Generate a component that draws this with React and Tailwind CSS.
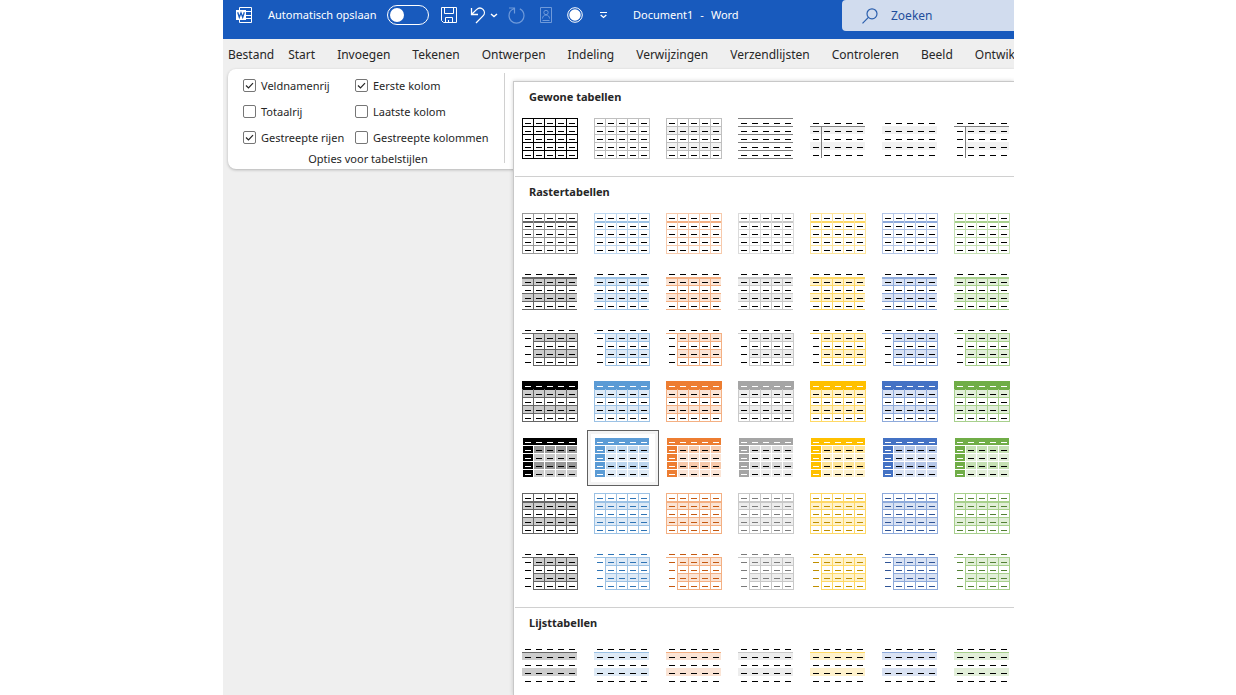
import { useState } from "react";

const PALETTES = [
  { name: "Zwart", strong: "#000000", line: "#666666", soft: "#999999", mid: "#999999", tint: "#cccccc", ink: "#000000" },
  { name: "Blauw", strong: "#5b9bd5", line: "#9cc2e5", soft: "#bdd6ee", mid: "#bdd6ee", tint: "#deeaf6", ink: "#2e74b5" },
  { name: "Oranje", strong: "#ed7d31", line: "#f4b083", soft: "#f7caac", mid: "#f7caac", tint: "#fbe4d5", ink: "#c45911" },
  { name: "Grijs", strong: "#a5a5a5", line: "#c9c9c9", soft: "#dbdbdb", mid: "#dbdbdb", tint: "#ededed", ink: "#7b7b7b" },
  { name: "Goud", strong: "#ffc000", line: "#ffd966", soft: "#ffe599", mid: "#ffe599", tint: "#fff2cc", ink: "#bf8f00" },
  { name: "Donkerblauw", strong: "#4472c4", line: "#8eaadb", soft: "#b4c6e7", mid: "#b4c6e7", tint: "#d9e2f3", ink: "#2f5496" },
  { name: "Groen", strong: "#70ad47", line: "#a8d08d", soft: "#c5e0b3", mid: "#c5e0b3", tint: "#e2efd9", ink: "#538135" },
];

// rect = [x, y, width, height, colour]
const rows = (ys, color, x = 0, w = 56) => ys.map((y) => [x, y, w, 1, color]);
const cols = (xs, color, y = 0, h = 41) => xs.map((x) => [x, y, 1, h, color]);
const bands = (color, x = 0, w = 55) => [
  [x, 8, w, 8, color],
  [x, 24, w, 8, color],
];
const ALL_Y = [0, 8, 16, 24, 32, 40];
const BODY_Y = [8, 16, 24, 32, 40];
const ALL_X = [0, 11, 22, 33, 44, 55];
const INNER_X = [11, 22, 33, 44];
const BODY_X = [11, 22, 33, 44, 55];
const fullGrid = (c) => [...rows(ALL_Y, c), ...cols(ALL_X, c)];

const PLAIN = [
  { name: "Tabelraster", rects: fullGrid("#000000") },
  { name: "Tabelraster licht", rects: fullGrid("#bfbfbf") },
  { name: "Onopgemaakte tabel 1", rects: [...bands("#f2f2f2"), ...fullGrid("#bfbfbf")] },
  { name: "Onopgemaakte tabel 2", rects: rows(ALL_Y, "#7f7f7f", 0, 55) },
  { name: "Onopgemaakte tabel 3", rects: [...bands("#f2f2f2"), [0, 8, 55, 1, "#7f7f7f"], [11, 8, 1, 32, "#7f7f7f"]] },
  { name: "Onopgemaakte tabel 4", rects: bands("#f2f2f2") },
  { name: "Onopgemaakte tabel 5", rects: [...bands("#f2f2f2", 11, 44), [0, 8, 55, 1, "#7f7f7f"], [11, 8, 1, 32, "#7f7f7f"]] },
];

const cornerGrid = (p) => [
  ...bands(p.tint, 11, 44),
  ...rows([8], p.line),
  ...rows([16, 24, 32, 40], p.line, 11, 45),
  ...cols(BODY_X, p.line, 8, 33),
];

const GRID_STYLES = [
  (p) => ({ rects: [...rows(ALL_Y, p.soft), [0, 8, 56, 2, p.line], ...cols(ALL_X, p.soft)] }),
  (p) => ({
    rects: [...bands(p.tint), ...rows(BODY_Y, p.line, 0, 55), ...cols(INNER_X, p.line, 8, 32), [0, 8, 55, 2, p.line]],
  }),
  (p) => ({ rects: cornerGrid(p) }),
  (p) => ({
    rects: [...bands(p.tint), [0, 0, 56, 9, p.strong], ...rows([16, 24, 32, 40], p.line), ...cols(ALL_X, p.line, 8, 33)],
    header: "#ffffff",
  }),
  (p) => ({
    rects: [
      [1, 1, 54, 7, p.strong],
      ...[0, 1, 2, 3].flatMap((r) =>
        [0, 1, 2, 3, 4].map((c) => [
          1 + c * 11,
          9 + r * 8,
          10,
          7,
          c === 0 ? p.strong : r % 2 === 0 ? p.mid : p.tint,
        ])
      ),
    ],
    header: "#ffffff",
    first: "#ffffff",
  }),
  (p) => ({ rects: [...bands(p.tint), ...fullGrid(p.line), [0, 8, 56, 2, p.line]], ink: p.ink }),
  (p) => ({ rects: cornerGrid(p), ink: p.ink }),
];

const LIST_STYLES = [(p) => ({ rects: [...bands(p.tint), [0, 8, 55, 1, p.line]] })];

const expand = (styles, label) =>
  styles.flatMap((make, i) => PALETTES.map((p) => ({ name: `${label} ${i + 1} ${p.name}`, ...make(p) })));

const SECTIONS = [
  { title: "Gewone tabellen", items: PLAIN },
  { title: "Rastertabellen", items: expand(GRID_STYLES, "Rastertabel") },
  { title: "Lijsttabellen", items: expand(LIST_STYLES, "Lijsttabel") },
];

const TABS = [
  "Start", "Invoegen", "Tekenen", "Ontwerpen", "Indeling",
  "Verwijzingen", "Verzendlijsten", "Controleren", "Beeld", "Ontwik",
];

const OPTIONS = [
  ["Veldnamenrij", true],
  ["Eerste kolom", true],
  ["Totaalrij", false],
  ["Laatste kolom", false],
  ["Gestreepte rijen", true],
  ["Gestreepte kolommen", false],
];

function Thumb({ rects, ink = "#000000", header, first }) {
  const steps = [0, 1, 2, 3, 4];
  return (
    <svg width="56" height="41" viewBox="0 0 56 41" shapeRendering="crispEdges" aria-hidden="true">
      {rects.map(([x, y, w, h, fill], i) => (
        <rect key={i} x={x} y={y} width={w} height={h} fill={fill} />
      ))}
      {steps.flatMap((r) =>
        steps.map((c) => (
          <rect
            key={`${r}-${c}`}
            x={3 + c * 11}
            y={5 + r * 8}
            width="6"
            height="1"
            fill={(r === 0 && header) || (c === 0 && first) || ink}
          />
        ))
      )}
    </svg>
  );
}

function StyleButton({ item, selected, onSelect }) {
  return (
    <button
      type="button"
      aria-label={item.name}
      aria-pressed={selected}
      onClick={onSelect}
      className={
        selected
          ? "flex h-14 w-[72px] items-start border border-[#606060] bg-[#f3f3f3] p-[3px]"
          : "flex h-14 w-[72px] items-start p-1"
      }
    >
      <span className="flex h-full w-full bg-white pt-[3px] pl-[3px]">
        <Thumb {...item} />
      </span>
    </button>
  );
}

function Gallery() {
  const [selected, setSelected] = useState("Rastertabel 5 Blauw");
  return (
    <section
      aria-label="Tabelstijlen"
      className="absolute top-[81px] right-0 bottom-0 left-[290px] overflow-hidden border-t border-l border-[#c8c8c8] bg-white pl-px shadow-[0_0_4px_rgba(0,0,0,0.18)]"
    >
      {SECTIONS.map((s, i) => (
        <div key={s.title} className={i > 0 ? "mt-[9px] border-t border-[#d0d0d0]" : ""}>
          <h2 className="flex h-[29px] items-center pt-0.5 pl-[14px] text-[11px] font-bold text-[#262626]">
            {s.title}
          </h2>
          <div className="grid grid-cols-[repeat(7,72px)]">
            {s.items.map((item) => (
              <StyleButton
                key={item.name}
                item={item}
                selected={selected === item.name}
                onSelect={() => setSelected(item.name)}
              />
            ))}
          </div>
        </div>
      ))}
    </section>
  );
}

function WordIcon() {
  return (
    <svg width="17" height="16" viewBox="0 0 17 16" fill="none" stroke="#fff" aria-hidden="true">
      <path d="M3.500 3V.5h12v15h-12V13M10 4.500h5.500M10 8.500h5.500M10 11.500h5.500" />
      <path d="M0 3h10v10H0z" fill="#fff" stroke="none" />
      <path d="M1.700 5.300l1.600 5 1.700-4.500 1.700 4.500 1.600-5" stroke="#185abd" strokeWidth="1.300" />
    </svg>
  );
}

function SaveIcon() {
  return (
    <svg width="16" height="16" viewBox="0 0 16 16" fill="none" stroke="#fff" aria-hidden="true">
      <path d="M.5.5h15v15H2.500l-2-2zM3.500.5v6h9v-6M4.500 15.500v-5h7v5M7.500 13v2.500" />
    </svg>
  );
}

function UndoIcon() {
  return (
    <svg width="16" height="17" viewBox="0 0 16 17" fill="none" stroke="#fff" strokeWidth="1.300" aria-hidden="true">
      <path d="M1.500 1v6.500H8M1.700 7.200L6.500 2.600c2-1.900 4.700-1.900 6.500-.2 1.900 1.900 1.800 4.700 0 6.500L6 16" />
    </svg>
  );
}

function RedoIcon() {
  return (
    <svg width="17" height="17" viewBox="0 0 17 17" fill="none" stroke="#6f9ada" strokeWidth="1.200" aria-hidden="true">
      <path d="M6 1.800C3 2.800 1 5.500 1 8.700a7.500 7.500 0 0 0 15 0c0-3-1.600-5.500-4.200-6.800M1 1h5.500v5.500" />
    </svg>
  );
}

function ContactIcon() {
  return (
    <svg width="13" height="16" viewBox="0 0 13 16" fill="none" stroke="#6f9ada" aria-hidden="true">
      <path d="M.5.5h11v15H.5z" />
      <circle cx="6" cy="5.500" r="2.200" />
      <path d="M2.500 11.500c0-2 1.500-3.500 3.500-3.500s3.500 1.500 3.500 3.500M2.500 13.500h7" />
    </svg>
  );
}

function TitleBar() {
  return (
    <header className="flex h-[39px] items-start bg-[#185abd] text-[11px] text-white">
      <div className="flex h-[30px] shrink-0 items-center">
        <span className="ml-[13px]"><WordIcon /></span>
        <label htmlFor="autosave" className="ml-[15px] w-[112px] whitespace-nowrap">Automatisch opslaan</label>
        <span className="ml-[7px] grid h-5 w-[42px] items-center">
          <input
            id="autosave"
            type="checkbox"
            role="switch"
            className="peer col-start-1 row-start-1 h-5 w-[42px] appearance-none rounded-full border border-white"
          />
          <span className="pointer-events-none col-start-1 row-start-1 ml-[3px] h-[14px] w-[14px] rounded-full bg-white peer-checked:ml-6" />
        </span>
        <button type="button" aria-label="Opslaan" className="ml-3"><SaveIcon /></button>
        <button type="button" aria-label="Ongedaan maken" className="ml-[13px]"><UndoIcon /></button>
        <button type="button" aria-label="Meer ongedaan maken" className="ml-1">
          <svg width="8" height="5" viewBox="0 0 8 5" fill="none" stroke="#fff" strokeWidth="1.400" aria-hidden="true">
            <path d="M1 1l3 2.500L7 1" />
          </svg>
        </button>
        <button type="button" aria-label="Opnieuw" disabled className="ml-[10px]"><RedoIcon /></button>
        <button type="button" aria-label="Contactpersoon" disabled className="ml-[15px]"><ContactIcon /></button>
        <button type="button" aria-label="Opnemen" className="ml-[14px]">
          <svg width="16" height="16" viewBox="0 0 16 16" aria-hidden="true">
            <circle cx="8" cy="8" r="7.300" fill="none" stroke="#fff" />
            <circle cx="8" cy="8" r="5.700" fill="#fff" />
          </svg>
        </button>
        <button type="button" aria-label="Werkbalk aanpassen" className="ml-[17px]">
          <svg width="8" height="8" viewBox="0 0 8 8" fill="none" stroke="#fff" aria-hidden="true">
            <path d="M0 1.500h7" />
            <path d="M.7 4l2.800 2.500L6.300 4" strokeWidth="1.300" />
          </svg>
        </button>
        <h1 className="ml-[25px] flex gap-[7px]">
          <span>Document1</span>
          <span>-</span>
          <span>Word</span>
        </h1>
      </div>
      <label className="ml-auto flex h-[31px] w-[172px] shrink-0 items-center rounded-l bg-[#d1dcee] pl-5 text-xs text-[#1f4e9c]">
        <svg width="16" height="16" viewBox="0 0 16 16" className="shrink-0" fill="none" stroke="#2b5fad" strokeWidth="1.200" aria-hidden="true">
          <circle cx="10" cy="5.800" r="5" />
          <path d="M6.400 9.300L.5 15.300" />
        </svg>
        <input
          type="text"
          aria-label="Zoeken"
          placeholder="Zoeken"
          className="ml-[13px] w-full min-w-0 bg-transparent outline-none placeholder:text-[#1f4e9c]"
        />
      </label>
    </header>
  );
}

export default function App() {
  return (
    <div className="min-h-screen bg-white pr-[222px] pl-[223px] font-['Noto_Sans','Open_Sans',sans-serif]">
      <div className="relative flex min-h-screen flex-col overflow-hidden bg-[#efefef] text-[#262626]">
        <TitleBar />
        <nav aria-label="Lint" className="flex h-[30px] items-center overflow-hidden pt-0.5 pl-[5px] text-xs whitespace-nowrap">
          <button type="button" className="mr-[14px]">Bestand</button>
          <div className="flex gap-[22px]">
            {TABS.map((t) => (
              <button key={t} type="button">{t}</button>
            ))}
          </div>
        </nav>
        <div className="ml-[5px] flex h-[100px] rounded-l-lg bg-white pt-1 shadow-[0_1px_3px_rgba(0,0,0,0.25)]">
          <fieldset className="flex h-[90px] w-[277px] flex-col border-r border-[#d0d0d0] pl-[15px] text-[11px] text-[#262626]">
            <div className="grid grid-cols-[112px_auto] whitespace-nowrap">
              {OPTIONS.map(([label, on]) => (
                <label key={label} className="flex h-[26px] items-center gap-[5px]">
                  <span className="mb-0.5 grid h-[13px] w-[13px] shrink-0">
                    <input
                      type="checkbox"
                      defaultChecked={on}
                      className="peer col-start-1 row-start-1 h-[13px] w-[13px] appearance-none rounded-xs border border-[#767676] bg-white"
                    />
                    <svg
                      viewBox="0 0 13 13"
                      fill="none"
                      stroke="#262626"
                      strokeWidth="1.200"
                      aria-hidden="true"
                      className="pointer-events-none invisible col-start-1 row-start-1 h-[13px] w-[13px] peer-checked:visible"
                    >
                      <path d="M3 6.500L5.500 9 10 4.200" />
                    </svg>
                  </span>
                  {label}
                </label>
              ))}
            </div>
            <div className="-ml-[15px] pt-0.5 pl-1 text-center leading-3">Opties voor tabelstijlen</div>
          </fieldset>
        </div>
        <main className="flex-1" />
        <Gallery />
      </div>
    </div>
  );
}
